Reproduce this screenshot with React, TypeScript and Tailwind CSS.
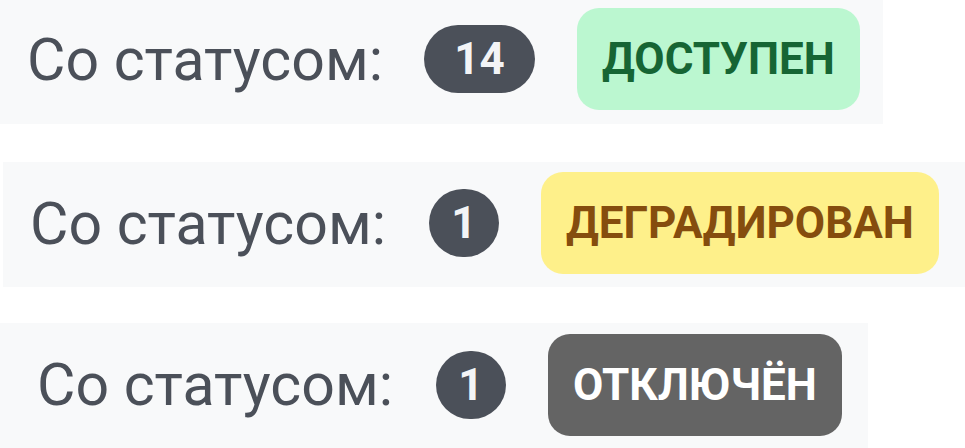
type Tone = "green" | "yellow" | "gray";

interface StatusRow {
  count: number;
  label: string;
  tone: Tone;
  rowClass: string;
  countClass: string;
}

const toneClasses: Record<Tone, string> = {
  green: "bg-[#bbf7d0] text-[#166534] w-[283px]",
  yellow: "bg-[#fef08a] text-[#854d0e] w-[398px]",
  gray: "bg-[#646464] text-white w-[294px]",
};

const rows: StatusRow[] = [
  {
    count: 14,
    label: "ДОСТУПЕН",
    tone: "green",
    rowClass: "ml-0 w-[883px] h-[124px] pl-[27px] pb-[6px]",
    countClass: "w-[111px] ml-[41px]",
  },
  {
    count: 1,
    label: "ДЕГРАДИРОВАН",
    tone: "yellow",
    rowClass: "ml-[3px] w-[962px] h-[125px] mt-[38px] pl-[27px] pb-[3px]",
    countClass: "w-[70px] ml-[43px]",
  },
  {
    count: 1,
    label: "ОТКЛЮЧЁН",
    tone: "gray",
    rowClass: "ml-0 w-[868px] h-[125px] mt-[36px] pl-[37px] pb-[2px]",
    countClass: "w-[70px] ml-[43px]",
  },
];

const StatusLine = ({ row }: { row: StatusRow }) => {
  return (
    <div className={`flex items-center bg-[#f8f9fa] ${row.rowClass}`}>
      <span className="text-[59px] leading-none text-[#4b5059] whitespace-nowrap">
        Со статусом:
      </span>
      <span
        className={`flex items-center justify-center h-[68px] rounded-full bg-[#4b5059] text-[44px] font-bold leading-none text-[#f3f4f6] ${row.countClass}`}
      >
        {row.count}
      </span>
      <span
        className={`ml-[42px] flex items-center justify-center h-[102px] rounded-[22px] text-[44px] font-bold leading-none whitespace-nowrap ${toneClasses[row.tone]}`}
      >
        {row.label}
      </span>
    </div>
  );
};

export default function App() {
  return (
    <div className="w-[965px] h-[448px] bg-white font-['Roboto',sans-serif] overflow-hidden">
      {rows.map((row) => (
        <StatusLine key={row.label} row={row} />
      ))}
    </div>
  );
}
